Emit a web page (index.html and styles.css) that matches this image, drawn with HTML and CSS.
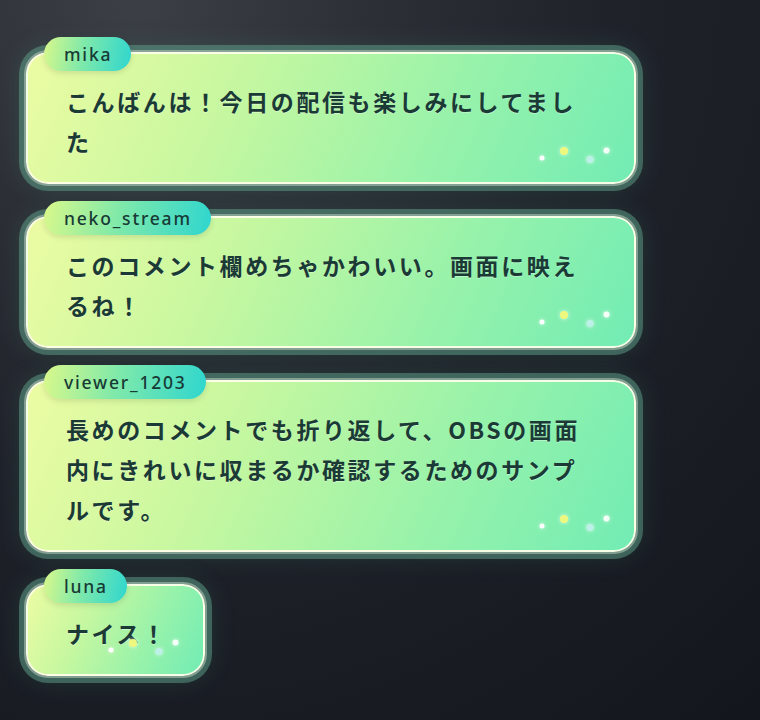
FILE: index.html
```html
<!DOCTYPE html>
<html lang="ja">

<head>
    <meta charset="UTF-8">
    <meta name="viewport" content="width=device-width, initial-scale=1.0">
    <title>コメント</title>
    <link rel="stylesheet" href="styles.css">
</head>

<body>

    <div class="chat">
        <div class="comment">
            <span class="name">mika</span>
            <p class="text">こんばんは！今日の配信も楽しみにしてました</p>
            <svg class="sparkle" viewBox="0 0 76 20" width="76" height="20">
                <circle cx="6" cy="14" r="2.5" fill="#fff" />
                <circle cx="28" cy="7" r="4" fill="#eef77e" />
                <circle cx="54" cy="15.5" r="3.5" fill="#bdf0e8" />
                <circle cx="70.5" cy="6.5" r="3" fill="#f4fff8" />
            </svg>
        </div>
        <div class="comment">
            <span class="name">neko_stream</span>
            <p class="text">このコメント欄めちゃかわいい。画面に映えるね！</p>
            <svg class="sparkle" viewBox="0 0 76 20" width="76" height="20">
                <circle cx="6" cy="14" r="2.5" fill="#fff" />
                <circle cx="28" cy="7" r="4" fill="#eef77e" />
                <circle cx="54" cy="15.5" r="3.5" fill="#bdf0e8" />
                <circle cx="70.5" cy="6.5" r="3" fill="#f4fff8" />
            </svg>
        </div>
        <div class="comment">
            <span class="name">viewer_1203</span>
            <p class="text">長めのコメントでも折り返して、OBSの画面内にきれいに収まるか確認するためのサンプルです。</p>
            <svg class="sparkle" viewBox="0 0 76 20" width="76" height="20">
                <circle cx="6" cy="14" r="2.5" fill="#fff" />
                <circle cx="28" cy="7" r="4" fill="#eef77e" />
                <circle cx="54" cy="15.5" r="3.5" fill="#bdf0e8" />
                <circle cx="70.5" cy="6.5" r="3" fill="#f4fff8" />
            </svg>
        </div>
        <div class="comment">
            <span class="name">luna</span>
            <p class="text">ナイス！</p>
            <svg class="sparkle" viewBox="0 0 76 20" width="76" height="20">
                <circle cx="6" cy="14" r="2.5" fill="#fff" />
                <circle cx="28" cy="7" r="4" fill="#eef77e" />
                <circle cx="54" cy="15.5" r="3.5" fill="#bdf0e8" />
                <circle cx="70.5" cy="6.5" r="3" fill="#f4fff8" />
            </svg>
        </div>
    </div>

</body>

</html>
```

FILE: styles.css
```css
* {margin: 0; padding: 0; box-sizing: border-box;}
html, body {height: 100%;}
body {
    background: radial-gradient(circle at 18% 0%, #3c3f46 0%, #2d2f36 25%, #20222a 50%, #13161d 100%);
    font-family: "Noto Sans CJK JP", sans-serif;
    color: #1b3a36;
    overflow: hidden;
}

.chat {display: flex; flex-direction: column; align-items: flex-start; gap: 32px; padding: 52px 0 0 26px;}

.comment {
    position: relative;
    max-width: 610px;
    padding: 27px 35px 21px 38px;
    border: 2px solid rgba(255, 255, 236, 0.92);
    border-radius: 22px;
    background: linear-gradient(115deg, #ecfca3 0%, #c4f7a0 35%, #95f2ab 70%, #72ecb4 100%);
    box-shadow:
        0 0 0 2px rgba(185, 205, 190, 0.55),
        0 0 0 7px rgba(95, 160, 138, 0.5),
        0 0 24px 6px rgba(70, 180, 140, 0.16);
}

.comment .name {
    position: absolute;
    top: -17px;
    left: 16px;
    height: 34px;
    padding: 0 19px 0 20px;
    border-radius: 17px;
    background: linear-gradient(100deg, #d9f88b 0%, #7fe9aa 45%, #2fd6cf 100%);
    box-shadow: 0 2px 6px rgba(0, 0, 0, 0.12);
    font-family: "Noto Sans", sans-serif;
    font-size: 17.5px;
    font-weight: 500;
    line-height: 34px;
    letter-spacing: 1.8px;
    color: #173a35;
    white-space: nowrap;
}

.comment .text {
    font-size: 23px;
    font-weight: 600;
    line-height: 40px;
    letter-spacing: 2.6px;
    text-shadow: 0 1px 0 rgba(255, 255, 255, 0.35);
}

.comment .sparkle {
    position: absolute;
    right: 22px;
    bottom: 18px;
    overflow: visible;
    filter: drop-shadow(0 0 2px rgba(255, 255, 255, 0.7));
}
```
